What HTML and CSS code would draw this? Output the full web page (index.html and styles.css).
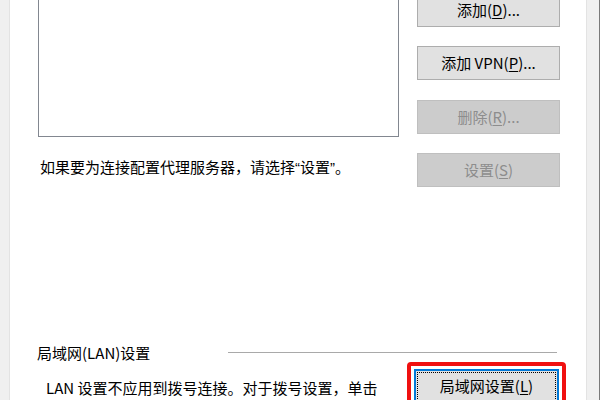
FILE: index.html
```html
<!DOCTYPE html>
<html lang="zh-CN">
<head>
<meta charset="utf-8">
<title>Internet 属性 - 连接</title>
<link rel="stylesheet" href="styles.css">
</head>
<body>
<div class="strip-left"></div>
<div class="panel">
  <div class="top">
    <div class="left-col">
      <div class="listbox"></div>
      <div class="hint">如果要为连接配置代理服务器，请选择<span class="q">“</span>设置<span class="q">”</span>。</div>
    </div>
    <div class="buttons">
      <div class="btn">添加(<u>D</u>)...</div>
      <div class="btn">添加 VPN(<u>P</u>)...</div>
      <div class="btn disabled">删除(<u>R</u>)...</div>
      <div class="btn disabled">设置(<u>S</u>)</div>
    </div>
  </div>
  <div class="group">
    <div class="group-head">
      <span class="group-title">局域网(LAN)设置</span>
      <span class="group-line"></span>
    </div>
    <div class="group-body">
      <div class="lan-text">LAN 设置不应用到拨号连接。对于拨号设置，单击</div>
      <div class="highlight">
        <div class="btn focused">局域网设置(<u>L</u>)</div>
      </div>
    </div>
  </div>
</div>
<div class="strip-right"></div>
</body>
</html>
```
FILE: styles.css
```css
html, body {
  margin: 0;
  padding: 0;
  width: 600px;
  height: 400px;
  overflow: hidden;
  background: #f0f0f0;
}
body {
  display: flex;
  font-family: "Noto Sans CJK SC", "Noto Sans", sans-serif;
  font-size: 15px;
  color: #000;
}
.strip-left {
  width: 9px;
  flex: none;
}
.panel {
  flex: none;
  width: 576px;
  height: 400px;
  background: #fff;
  border-left: 1px solid #e3e3e3;
  border-right: 1px solid #e3e3e3;
  display: flex;
  flex-direction: column;
  overflow: hidden;
}
.strip-right {
  flex: none;
  width: 12px;
  border-right: 1px solid #7a7a7a;
}
.top {
  display: flex;
  margin-top: -8px;
  padding-left: 28px;
}
.left-col {
  display: flex;
  flex-direction: column;
}
.listbox {
  width: 359px;
  height: 143px;
  border: 1px solid #828790;
  background: #fff;
}
.hint {
  margin-top: 20px;
  padding-left: 2px;
  line-height: 20px;
  white-space: nowrap;
}
.q {
  font-family: "Liberation Sans", sans-serif;
}
.buttons {
  display: flex;
  flex-direction: column;
  gap: 19.33px;
  margin-left: 18px;
  margin-top: 1px;
}
.btn {
  box-sizing: border-box;
  width: 143px;
  height: 34px;
  border: 1px solid #adadad;
  background: #e1e1e1;
  display: flex;
  align-items: center;
  justify-content: center;
  line-height: 20px;
  white-space: nowrap;
}
.btn u {
  text-underline-offset: 2px;
}
.btn.disabled {
  background: #cccccc;
  border-color: #bfbfbf;
  color: #8d8d8d;
}
.group {
  margin-top: 156px;
}
.group-head {
  display: flex;
  align-items: center;
  height: 19px;
}
.group-title {
  padding-left: 27px;
  line-height: 19px;
}
.group-line {
  margin-left: auto;
  margin-right: 29px;
  width: 329px;
  height: 1px;
  background: #a9a9a9;
}
.group-body {
  display: flex;
  align-items: flex-start;
}
.lan-text {
  margin-top: 16px;
  padding-left: 36px;
  line-height: 20px;
  white-space: nowrap;
}
.highlight {
  margin-left: auto;
  margin-right: 20px;
  border: 4px solid #f01010;
  border-radius: 4px;
  padding: 3px;
  background: #fff;
}
.btn.focused {
  width: 145px;
  height: 35px;
  border: 2px solid #0078d7;
  outline: 1px dotted #000;
  outline-offset: -4px;
}
```
